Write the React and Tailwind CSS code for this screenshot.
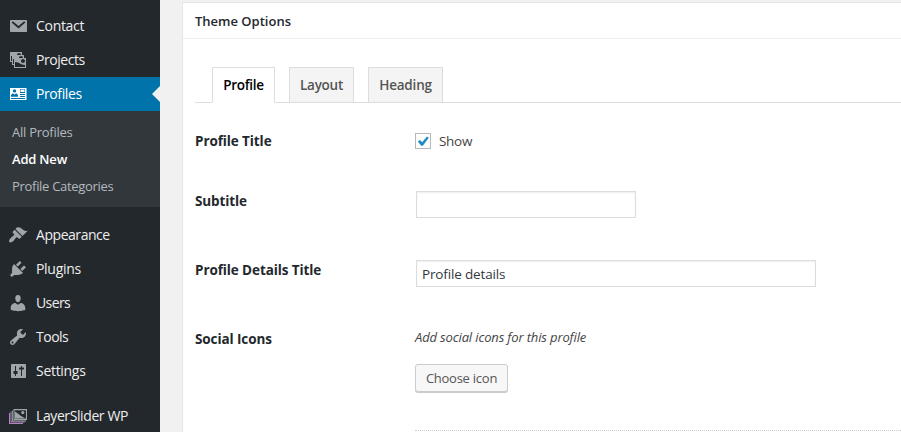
function Icon({ name }) {
  return (
    <svg viewBox="0 0 20 20" className="h-5 w-5 shrink-0" fill="currentColor" fillRule="evenodd">
      {name === "mail" && (
        <path d="M3 4h15c.7 0 1 .3 1 1v10c0 .7-.3 1-1 1H3c-.7 0-1-.3-1-1V5c0-.7.3-1 1-1zM3.600 6.500 10.500 12.400l6.900-5.900-1.200-1.300-5.700 4.800-5.700-4.800z" />
      )}
      {name === "projects" && (
        <path d="M4 15v-3H2V2h12v3h2v3h2v10H6v-3H4zm7-12c-1.1 0-2 .9-2 2h4c0-1.1-.89-2-2-2zm-7 8V6H3v5h1zm7-3h4c0-1.1-.89-2-2-2-1.1 0-2 .9-2 2zm-5 6V9H5v5h1zm9-1c1.1 0 2-.89 2-2 0-1.1-.9-2-2-2s-2 .9-2 2c0 1.11.9 2 2 2zm2 4v-2c-5 0-5-3-10-3v5h10z" />
      )}
      {name === "card" && (
        <path d="M2 4h16.500v12H2zM6.500 5.200a1.700 1.700 0 1 0 0 3.400 1.700 1.700 0 0 0 0-3.400zM3 12.800h7V11L8.200 9.300 6.500 10.400 4.800 9.300 3 11zM12 5v4h5V5zM12 10v1h5v-1zM12 12v1h5v-1zM3 14v.9h14V14z M12.500 5.500h4V8h-4z" />
      )}
      {name === "brush" && (
        <path d="M14.48 11.06L7.41 3.99l1.5-1.5c.5-.56 2.3-.47 3.51.32 1.21.8 1.43 1.28 2.91 2.1 1.18.64 2.45 1.26 4.45.85zm-.71.71L6.7 4.7 4.93 6.47c-.39.39-.39 1.02 0 1.41l1.06 1.06c.39.39.39 1.03 0 1.42-.6.6-1.43 1.11-2.21 1.69-.35.26-.7.53-1.01.84C1.43 14.23.4 16.08 1.4 17.07c.99 1 2.84-.03 4.18-1.36.31-.31.58-.66.85-1.02.57-.78 1.08-1.61 1.69-2.21.39-.39 1.02-.39 1.41 0l1.06 1.06c.39.39 1.02.39 1.41 0z" />
      )}
      {name === "plug" && (
        <path d="M13.11 4.36L9.87 7.6 8 5.73l3.24-3.24c.35-.34 1.05-.2 1.56.32.52.51.66 1.21.31 1.55zm-8 1.77l.91-1.12 9.01 9.01-1.19.84c-.71.71-2.63 1.16-3.82 1.16H6.14L4.9 17.26c-.59.59-1.54.59-2.12 0-.59-.58-.59-1.53 0-2.12l1.24-1.24v-3.88c0-1.13.4-3.19 1.09-3.89zm7.26 3.97l3.24-3.24c.34-.35 1.04-.21 1.55.31.52.51.66 1.21.31 1.55l-3.24 3.25z" />
      )}
      {name === "user" && (
        <path d="M10 9.25c-2.27 0-2.73-3.44-2.73-3.44C7 4.02 7.82 2 9.97 2c2.16 0 2.98 2.02 2.71 3.81 0 0-.41 3.44-2.68 3.44zm0 2.57L12.72 10c2.39 0 4.52 2.33 4.52 4.53v2.49s-3.65 1.13-7.24 1.13c-3.65 0-7.24-1.13-7.24-1.13v-2.49c0-2.25 1.94-4.48 4.47-4.48z" />
      )}
      {name === "wrench" && (
        <path d="M16.68 9.77c-1.34 1.34-3.3 1.67-4.95.99l-5.41 6.52c-.99.99-2.59.99-3.58 0s-.99-2.59 0-3.57l6.52-5.42c-.68-1.65-.35-3.61.99-4.95 1.28-1.28 3.12-1.62 4.72-1.06l-2.89 2.89 2.82 2.82 2.86-2.87c.53 1.58.18 3.39-1.08 4.65zM3.81 16.21c.4.39 1.04.39 1.43 0 .4-.4.4-1.04 0-1.43-.39-.4-1.03-.4-1.43 0-.39.39-.39 1.03 0 1.43z" />
      )}
      {name === "sliders" && (
        <path d="M4 3h13c.6 0 1 .4 1 1v12c0 .6-.4 1-1 1H4c-.6 0-1-.4-1-1V4c0-.6.4-1 1-1zM7 5v5H5.500v3H7v2h1v-2h1.500v-3H8V5zM13 5v1.500h-2v2h2V15h1V8.500h2v-2h-2V5z" />
      )}
      {name === "slides" && (
        <>
          <path fill="#b67fc4" d="M1 7h1v10h13v1H1z" />
          <path fill="#a98bb5" d="M2.500 5.500h1V15.500h13v1h-14z" />
          <path d="M4 4.500h.800v10H18v1H4z" />
          <path d="M5.500 3H19v11H5.500zM6.600 4.200v8.600h11.300V4.200z" />
          <path d="M7 5.500l3.800 2.700 2.200 1.800 4.500 2.500H7zM14.800 5a1.600 1.600 0 1 1 0 3.200 1.600 1.600 0 0 1 0-3.200z" />
        </>
      )}
    </svg>
  );
}

function MenuItem({ icon, label, tracking, active }) {
  return (
    <a
      className={
        "relative flex h-[34px] items-center gap-2 pl-2 text-[14px] leading-[18px] " +
        (active ? "bg-[#0073aa] text-white" : "text-[#eee]")
      }
    >
      <span className={active ? "text-white" : "text-[#a0a5aa]"}>
        <Icon name={icon} />
      </span>
      <span className={"whitespace-nowrap " + tracking}>{label}</span>
      {active && (
        <span className="absolute right-0 top-[9px] border-8 border-transparent border-r-[#f1f1f1]" />
      )}
    </a>
  );
}

function Tab({ label, className }) {
  return (
    <div className={"flex h-9 items-center justify-center border border-[#ddd] text-[13.5px] font-semibold whitespace-nowrap " + className}>
      {label}
    </div>
  );
}

function Row({ label, className, children }) {
  return (
    <div className={"flex items-start " + className}>
      <div className="w-[220px] shrink-0 text-[13.5px] font-bold leading-5 tracking-[-0.1px] text-[#23282d]">{label}</div>
      {children}
    </div>
  );
}

export default function App() {
  return (
    <div className="flex h-[432px] w-[901px] overflow-hidden bg-[#f1f1f1] font-['Open_Sans','Noto_Sans',sans-serif] text-[#444]">
      <aside className="w-40 shrink-0 bg-[#23282d] pt-[9px]">
        <MenuItem icon="mail" label="Contact" tracking="tracking-[-0.3px]" />
        <MenuItem icon="projects" label="Projects" tracking="tracking-[-0.45px]" />
        <MenuItem icon="card" label="Profiles" tracking="tracking-[-0.4px]" active />
        <div className="mb-[11px] flex h-24 flex-col bg-[#32373c] pl-3 pt-2 text-[13px] leading-[27px] text-[#b4b9be]">
          <a className="tracking-[-0.25px]">All Profiles</a>
          <a className="font-semibold tracking-[-0.2px] text-white">Add New</a>
          <a className="tracking-[-0.3px]">Profile Categories</a>
        </div>
        <MenuItem icon="brush" label="Appearance" tracking="tracking-[-0.45px]" />
        <MenuItem icon="plug" label="Plugins" tracking="tracking-[-0.3px]" />
        <MenuItem icon="user" label="Users" tracking="tracking-[-0.6px]" />
        <MenuItem icon="wrench" label="Tools" tracking="tracking-[-0.5px]" />
        <MenuItem icon="sliders" label="Settings" tracking="tracking-[-0.3px]" />
        <div className="h-[11px]" />
        <MenuItem icon="slides" label="LayerSlider WP" tracking="tracking-[-0.4px]" />
      </aside>

      <main className="ml-[22px] mt-[2px] min-w-0 flex-1 border-l border-t border-[#e5e5e5] bg-white">
        <h2 className="h-9 border-b border-[#eee] pl-3 text-[13px] font-semibold leading-[36px] text-[#23282d]">
          Theme Options
        </h2>
        <div className="pl-3 pt-7">
          <div className="flex h-9 gap-[14px] border-b border-[#ddd] pl-[17px]">
            <Tab label="Profile" className="w-[63px] border-b-white bg-white tracking-[-0.3px] text-black" />
            <Tab label="Layout" className="w-[65px] bg-[#f4f4f4] tracking-[-0.25px] text-[#555]" />
            <Tab label="Heading" className="w-[75px] bg-[#f4f4f4] tracking-[-0.2px] text-[#555]" />
          </div>
          <Row label="Profile Title" className="h-[60px] pt-7">
            <label className="flex h-5 items-center gap-2 text-[13.5px] tracking-[-0.3px]">
              <span className="flex h-4 w-4 items-center justify-center border border-[#b4b9be] bg-white">
                <svg viewBox="0 0 14 14" className="h-3.5 w-3.5" fill="#1e8cbe">
                  <path d="M1.800 7.500 4.200 6 6.100 8.300 11 2.500 12.800 3.800 6.800 11.800 5.300 11.800z" />
                </svg>
              </span>
              Show
            </label>
          </Row>
          <Row label="Subtitle" className="h-[69px] pt-7">
            <div className="ml-px h-[27px] w-[220px] border border-[#ddd] shadow-[inset_0_1px_2px_rgba(0,0,0,0.07)]" />
          </Row>
          <Row label="Profile Details Title" className="h-[69px] pt-7">
            <div className="ml-px flex h-[27px] w-[400px] items-center border border-[#ddd] pl-[5px] pt-0.5 text-[13.5px] tracking-[-0.15px] text-[#32373c] shadow-[inset_0_1px_2px_rgba(0,0,0,0.07)]">
              Profile details
            </div>
          </Row>
          <Row label="Social Icons" className="pt-7">
            <div className="flex-1">
              <p className="-mt-0.5 text-[13px] italic leading-5 tracking-[-0.14px]">Add social icons for this profile</p>
              <button className="mt-[17px] flex h-7 w-[93px] items-center justify-center rounded-[3px] border border-[#ccc] bg-[#f7f7f7] pt-0.5 text-[13px] tracking-[-0.25px] text-[#555] shadow-[0_1px_0_#ccc]">
                Choose icon
              </button>
              <div className="mt-[38px] border-t border-dotted border-[#ccc]" />
            </div>
          </Row>
        </div>
      </main>
    </div>
  );
}
